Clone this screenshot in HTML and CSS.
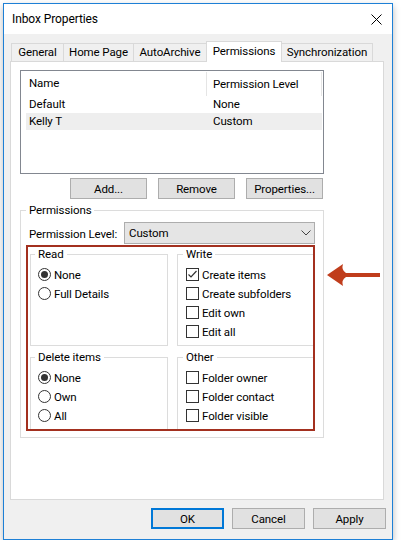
FILE: index.html
```html
<!DOCTYPE html>
<html>
<head>
<meta charset="utf-8">
<link rel="stylesheet" href="styles.css">
</head>
<body>
<div class="window">
  <div class="titlebar">
    <span class="title">Inbox Properties</span>
    <svg class="close" width="11" height="11" viewBox="0 0 11 11"><path d="M0.5 0.5L10.5 10.5M10.5 0.5L0.5 10.5" stroke="#000" stroke-width="1" fill="none"/></svg>
  </div>
  <div class="body">
    <div class="tabs">
      <div class="tab t-general">General</div>
      <div class="tab t-home">Home Page</div>
      <div class="tab t-auto">AutoArchive</div>
      <div class="tab t-perm active">Permissions</div>
      <div class="tab t-sync">Synchronization</div>
    </div>
    <div class="panel">
      <div class="listbox">
        <div class="lhead"><div class="hname">Name</div><div class="hlevel">Permission Level</div></div>
        <div class="lrow"><span class="cname">Default</span><span>None</span></div>
        <div class="lrow sel"><span class="cname">Kelly T</span><span>Custom</span></div>
      </div>
      <div class="listbtns">
        <button class="btn lbtn">Add...</button>
        <button class="btn lbtn">Remove</button>
        <button class="btn lbtn">Properties...</button>
      </div>
      <fieldset class="group perm">
        <legend>Permissions</legend>
        <div class="levelrow">
          <span class="lvl-label">Permission Level:</span>
          <div class="combo"><span>Custom</span><svg width="10" height="6" viewBox="0 0 10 6"><path d="M0.5 0.5L5 5L9.5 0.5" stroke="#444" stroke-width="1" fill="none"/></svg></div>
        </div>
        <div class="mark">
          <fieldset class="group sub">
            <legend>Read</legend>
            <div class="opt"><span class="radio on"></span>None</div>
            <div class="opt"><span class="radio"></span>Full Details</div>
          </fieldset>
          <fieldset class="group sub right">
            <legend>Write</legend>
            <div class="opt"><span class="check"><svg width="11" height="11" viewBox="0 0 11 11"><path d="M1.5 5.5L4 8L9.5 2" stroke="#333" stroke-width="1.2" fill="none"/></svg></span>Create items</div>
            <div class="opt"><span class="check"></span>Create subfolders</div>
            <div class="opt"><span class="check"></span>Edit own</div>
            <div class="opt"><span class="check"></span>Edit all</div>
          </fieldset>
          <fieldset class="group sub bottom">
            <legend>Delete items</legend>
            <div class="opt"><span class="radio on"></span>None</div>
            <div class="opt"><span class="radio"></span>Own</div>
            <div class="opt"><span class="radio"></span>All</div>
          </fieldset>
          <fieldset class="group sub right bottom">
            <legend>Other</legend>
            <div class="opt"><span class="check"></span>Folder owner</div>
            <div class="opt"><span class="check"></span>Folder contact</div>
            <div class="opt"><span class="check"></span>Folder visible</div>
          </fieldset>
        </div>
      </fieldset>
      <svg class="arrow" width="56" height="24" viewBox="0 0 56 24"><path d="M1 12L17 1Q15 7 20 10L54 10L54 14L20 14Q15 17 17 23Z" fill="#c03d1c"/></svg>
    </div>
    <div class="footer">
      <button class="btn fbtn okbtn">OK</button>
      <button class="btn fbtn">Cancel</button>
      <button class="btn fbtn">Apply</button>
    </div>
  </div>
</div>
</body>
</html>
```

FILE: styles.css
```css
html, body {
  margin: 0;
  padding: 0;
  background: #fff;
}
body {
  font-family: Roboto, "Liberation Sans", sans-serif;
  font-size: 11.5px;
  letter-spacing: -0.1px;
  color: #000;
}
.window {
  margin: 3px 0 0 3px;
  width: 390px;
  height: 537px;
  box-sizing: border-box;
  border: 1px solid #1e80d6;
  background: #f0f0f0;
  box-shadow: 0 3px 7px rgba(0, 0, 0, 0.28);
  display: flex;
  flex-direction: column;
}
.titlebar {
  flex: none;
  height: 30px;
  background: #fff;
  display: flex;
  align-items: center;
  justify-content: space-between;
  padding: 0 10px 0 8px;
}
.title {
  font-size: 12px;
}
.close {
  display: block;
}
.body {
  flex: 1;
  display: flex;
  flex-direction: column;
  padding: 7px 8px 10px 6px;
}
.tabs {
  display: flex;
  align-items: flex-end;
  height: 20px;
  padding-left: 1px;
}
.tab {
  box-sizing: border-box;
  height: 18px;
  border: 1px solid #d9d9d9;
  border-bottom: 0;
  background: #f0f0f0;
  line-height: 17px;
  text-align: center;
  margin-left: -1px;
  white-space: nowrap;
}
.t-general { width: 53px; margin-left: 0; }
.t-home { width: 71px; }
.t-auto { width: 74px; }
.t-perm { width: 76px; }
.t-sync { width: 92px; }
.tab.active {
  height: 21px;
  margin-bottom: -1px;
  background: #fff;
  line-height: 18px;
  position: relative;
  z-index: 1;
}
.panel {
  height: 439px;
  box-sizing: border-box;
  border: 1px solid #d9d9d9;
  background: #fff;
  position: relative;
  padding: 8px 0 0 9px;
}
.listbox {
  width: 304px;
  height: 104px;
  box-sizing: border-box;
  border: 1px solid #828790;
  background: #fff;
}
.lhead {
  display: flex;
  height: 25px;
}
.hname {
  width: 185px;
  box-sizing: border-box;
  padding-left: 8px;
  line-height: 25px;
}
.hlevel {
  width: 116px;
  box-sizing: border-box;
  margin-top: 1px;
  border-left: 1px solid #e5e5e5;
  border-right: 1px solid #e5e5e5;
  padding-left: 6px;
  line-height: 24px;
}
.lrow {
  display: flex;
  height: 17px;
  line-height: 17px;
  margin-left: 5px;
  width: 296px;
  box-sizing: border-box;
  padding-left: 3px;
}
.lrow.sel {
  background: #eeeeee;
}
.cname {
  width: 184px;
}
.listbtns {
  display: flex;
  justify-content: flex-end;
  gap: 11px;
  width: 304px;
  box-sizing: border-box;
  padding-right: 1px;
  margin-top: 4px;
}
.btn {
  box-sizing: border-box;
  height: 21px;
  border: 1px solid #adadad;
  background: #e1e1e1;
  font: inherit;
  letter-spacing: inherit;
  color: #000;
  padding: 0;
  margin: 0;
}
.lbtn {
  width: 77px;
}
.group {
  margin: 0;
  border: 1px solid #dcdcdc;
  min-width: 0;
  box-sizing: border-box;
}
.group legend {
  padding: 0 3px;
  line-height: 14px;
}
.perm {
  width: 304px;
  margin-top: 4px;
  padding: 5px 8px 6px 5px;
}
.levelrow {
  display: flex;
  align-items: center;
  height: 22px;
}
.lvl-label {
  margin-left: 3px;
  padding-top: 2px;
}
.combo {
  margin-left: auto;
  width: 191px;
  height: 22px;
  box-sizing: border-box;
  border: 1px solid #adadad;
  background: #e5e5e5;
  display: flex;
  align-items: center;
  justify-content: space-between;
  padding: 0 3px 0 4px;
}
.combo svg {
  display: block;
}
.mark {
  margin-top: 1px;
  height: 186px;
  box-sizing: border-box;
  border: 2px solid #a3301f;
  display: grid;
  grid-template-columns: 138px 136px;
  grid-template-rows: 99px 79px;
  column-gap: 9px;
  row-gap: 4px;
  padding-left: 2px;
}
.sub {
  padding: 4px 0 0 7px;
}
.sub legend {
  margin-left: -3px;
}
.sub.right {
  border-right: 0;
  padding-left: 8px;
}
.sub.bottom {
  border-bottom: 0;
}
.opt {
  display: flex;
  align-items: center;
  gap: 3px;
  height: 19px;
  white-space: nowrap;
}
.radio {
  flex: none;
  width: 13px;
  height: 13px;
  box-sizing: border-box;
  border: 1px solid #333;
  border-radius: 50%;
  background: #fff;
  display: flex;
  align-items: center;
  justify-content: center;
}
.radio.on::after {
  content: "";
  width: 7px;
  height: 7px;
  border-radius: 50%;
  background: #333;
}
.check {
  flex: none;
  width: 13px;
  height: 13px;
  box-sizing: border-box;
  border: 1px solid #333;
  background: #fff;
}
.check svg {
  display: block;
}
.arrow {
  position: absolute;
  left: 315px;
  top: 201px;
}
.footer {
  display: flex;
  justify-content: flex-end;
  gap: 8px;
  margin-top: 8px;
  margin-right: -2px;
}
.fbtn {
  width: 73px;
}
.okbtn {
  border: 2px solid #0078d7;
}
```
